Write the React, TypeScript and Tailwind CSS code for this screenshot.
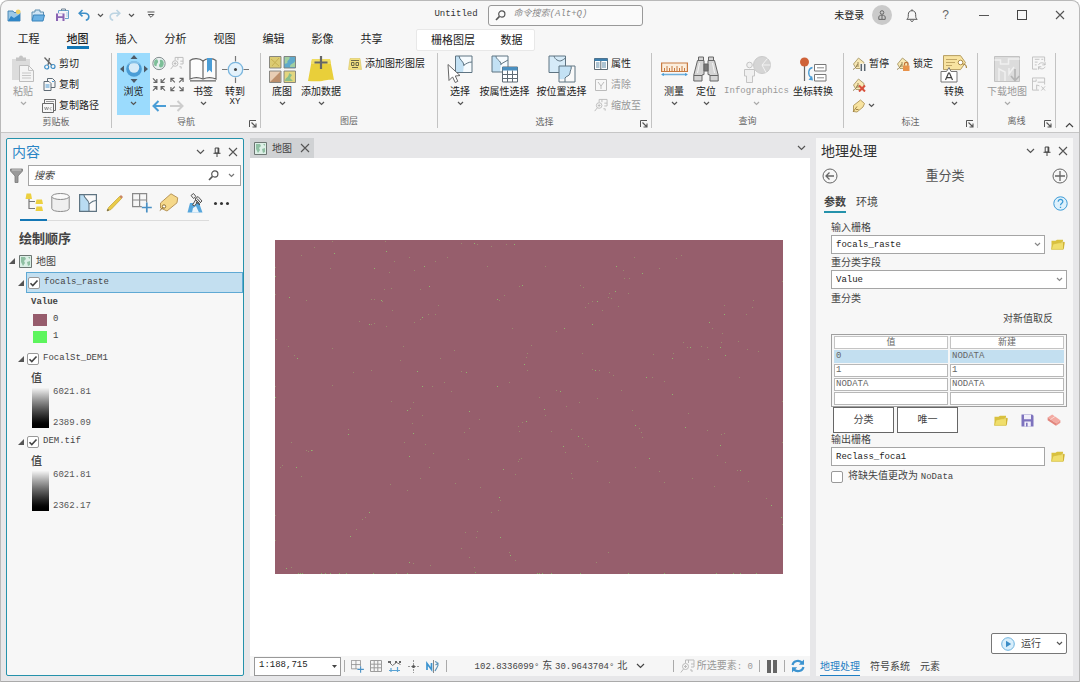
import { useState } from "react";
import type { ReactNode } from "react";
import clsx from "clsx";

const mono = "font-['Liberation_Mono','Noto_Sans_CJK_SC',monospace]";

/* ---------- small glyphs ---------- */

function Chevron({ className = "text-[#555]" }: { className?: string }) {
  return (
    <svg className={clsx("shrink-0", className)} width="7" height="5" viewBox="0 0 7 5" fill="none">
      <path d="M1 1l2.5 2.5L6 1" stroke="currentColor" strokeWidth="1.2" />
    </svg>
  );
}

function WideChevron({ className = "text-[#555]" }: { className?: string }) {
  return (
    <svg className={clsx("shrink-0", className)} width="9" height="6" viewBox="0 0 9 6" fill="none">
      <path d="M1 1l3.5 3.5L8 1" stroke="currentColor" strokeWidth="1.2" />
    </svg>
  );
}

function Cross() {
  return (
    <svg width="10" height="10" viewBox="0 0 10 10" fill="none">
      <path d="M1 1l8 8M9 1l-8 8" stroke="#555" strokeWidth="1.1" />
    </svg>
  );
}

function Pin() {
  return (
    <svg width="8" height="11" viewBox="0 0 8 11" fill="none" stroke="#444">
      <path d="M2.2 1h3.6v5H2.2zM.5 6.3h7M4 6.5V10" />
      <path d="M5.2 1v5" strokeWidth="1.3" />
    </svg>
  );
}

function Magnifier() {
  return (
    <svg className="shrink-0" width="11" height="11" viewBox="0 0 11 11" fill="none" stroke="#555">
      <circle cx="6.8" cy="4" r="3.1" strokeWidth="1.2" />
      <path d="M4.5 6.4L1 10" strokeWidth="1.6" />
    </svg>
  );
}

function Twisty() {
  return (
    <svg className="shrink-0" width="6" height="6" viewBox="0 0 6 6">
      <path d="M6 0v6H0z" fill="#555" />
    </svg>
  );
}

function Launcher() {
  return (
    <svg width="8" height="8" viewBox="0 0 8 8" fill="none" stroke="#555">
      <path d="M.5 7V.5H7" />
      <path d="M2.5 2.5l4 4M7 3.5V7H3.5" strokeWidth="1.1" />
    </svg>
  );
}

function Folder() {
  return (
    <svg width="14" height="11" viewBox="0 0 14 11">
      <path d="M.5 10V1.8h4L6 .8h6v1.7" fill="#d9c13f" />
      <path d="M.4 10.4L2 5l6-1.2 5.6-.4-1.4 7z" fill="#f0de6c" stroke="#d2bb3a" strokeWidth=".6" />
      <path d="M12.2 2.4l.8 1v5.6l-.8 1.2z" fill="#caa92e" />
    </svg>
  );
}

function SaveIcon() {
  return (
    <svg width="13" height="13" viewBox="0 0 13 13">
      <path d="M.5.5h10.7l1.3 1.3v10.7H.5z" fill="#7d72bd" />
      <path d="M3 .8h7v4.4H3zM3.4 7.6h6.4v4.9H3.4z" fill="#f1effa" />
      <path d="M5 8.8h1.6v3.7H5z" fill="#7d72bd" />
    </svg>
  );
}

function Eraser() {
  return (
    <svg width="14" height="12" viewBox="0 0 14 12">
      <path d="M.6 3.6L5.2.6l8.2 5.6-4.4 3z" fill="#f3aaa2" />
      <path d="M.6 3.6L9 9.2v2.6L.6 6.2z" fill="#e2857c" />
      <path d="M9 9.2l4.4-3v2.6L9 11.8z" fill="#eb978e" />
      <path d="M3.5 5.5L8 2.5" stroke="#fbd8d3" />
    </svg>
  );
}

/* ---------- quick access toolbar ---------- */

function NewProject() {
  return (
    <svg width="14" height="13" viewBox="0 0 14 13">
      <path d="M1 2h5l1 1.5h6V12H1z" fill="#9cc9e6" stroke="#3f7fb0" strokeWidth=".9" />
      <path d="M1 12l3-5 3 2 6-4v7z" fill="#2f86c6" />
      <circle cx="11.2" cy="2.8" r="2.4" fill="#efd36a" />
    </svg>
  );
}

function OpenProject() {
  return (
    <svg width="14" height="13" viewBox="0 0 14 13" fill="none">
      <path d="M1 11V3h3V1h5v2h3.500v3" fill="#cfe5f5" stroke="#5f8fb0" />
      <path d="M1 12l1.500-6h11L12 12z" fill="#6bb1e3" stroke="#3883bb" />
    </svg>
  );
}

function SaveProject() {
  return (
    <svg width="15" height="14" viewBox="0 0 15 14" fill="none">
      <path d="M3.5 5V2.5h10v8H10" stroke="#6aa3cc" />
      <path d="M6.5 2.5V1h4v1.5" stroke="#6a7f90" />
      <path d="M12 4v5" stroke="#a9cde6" />
      <path d="M1 5.5h8.5V13H1z" fill="#8a64b4" />
      <path d="M3 5.5h4.5v2.7H3zM3 10h4.5v3H3z" fill="#f3eef9" />
    </svg>
  );
}

function Undo({ faded = false }: { faded?: boolean }) {
  return (
    <svg
      className={faded ? "-scale-x-100 text-[#bcd4e2]" : "text-[#3d8fc8]"}
      width="12"
      height="12"
      viewBox="0 0 12 12"
      fill="none"
      stroke="currentColor"
    >
      <path d="M4.5 1L1.2 4.2l3.3 3.2M1.5 4.2h5.3c5.4.3 5 6.3 1 7" strokeWidth="1.6" />
    </svg>
  );
}

function CustomizeBar() {
  return (
    <svg width="8" height="8" viewBox="0 0 8 8" fill="none" stroke="#555">
      <path d="M.5 1h7" />
      <path d="M1.2 3.5h5.6L4 6.3z" />
    </svg>
  );
}

function Bell() {
  return (
    <svg width="12" height="13" viewBox="0 0 12 13" fill="none" stroke="#555">
      <path d="M.8 10.3c1.500-1.300 1.500-2 1.500-4.600C2.300 3 3.800 1.700 6 1.700S9.700 3 9.700 5.700c0 2.600 0 3.300 1.500 4.600z" />
      <path d="M4.5 11.3c.5 1.500 2.500 1.500 3 0M6 .3v1.400" />
    </svg>
  );
}

/* ---------- ribbon icons ---------- */

function PasteIcon() {
  return (
    <svg width="24" height="28" viewBox="0 0 24 28">
      <path d="M1 4h18v21H1z" fill="#dcdcdc" />
      <path d="M5 2.500h3a2 2 0 014 0h3V6H5z" fill="#c4c4c4" />
      <path d="M8.500 10.500h9l5 5v11h-14z" fill="#f4f4f4" stroke="#bdbdbd" />
      <path d="M17.500 10.500v5h5M11 18h9M11 20.500h9M11 23h9" fill="none" stroke="#c6c6c6" />
    </svg>
  );
}

function CutIcon() {
  return (
    <svg width="13" height="13" viewBox="0 0 13 13" fill="none">
      <path d="M1.500.5L9 8.500M6.500 1L5 8" stroke="#666" strokeWidth="1.300" />
      <circle cx="3.700" cy="10" r="2" stroke="#3d8fc8" strokeWidth="1.200" />
      <circle cx="10" cy="9.500" r="2" stroke="#3d8fc8" strokeWidth="1.200" />
    </svg>
  );
}

function CopyIcon() {
  return (
    <svg width="13" height="13" viewBox="0 0 13 13" fill="#f7f7f7" stroke="#5f6b75">
      <path d="M4.500.5h5l2.500 2.500v6.500H4.500z" />
      <path d="M1 3.500h5L8 5.500v7H1z" />
      <path d="M2.500 7h4M2.500 9h4M9 3.500h2" stroke="#4c9ad2" />
    </svg>
  );
}

function CopyPathIcon() {
  return (
    <svg width="14" height="14" viewBox="0 0 14 14" fill="#f7f7f7" stroke="#6b6b6b">
      <path d="M2.500.5h11v11h-11z" />
      <path d="M4 2.500h8" stroke="#999" />
      <path d="M.5 4.500h11v9H.5z" />
      <path d="M2.500 8l1 3 1-3 1 3 1-3M9.500 8.500c-2 0-2 2.500 0 2.500" fill="none" stroke="#888" strokeWidth=".8" />
    </svg>
  );
}

function ExploreIcon() {
  return (
    <svg width="28" height="28" viewBox="0 0 28 28">
      <path d="M14 0l3.500 4h-7zM14 28l3.500-4h-7zM0 14l4-3.500v7zM28 14l-4-3.500v7z" fill="#4d5a66" />
      <circle cx="14" cy="14" r="7.800" fill="#4a9dd6" />
      <circle cx="14" cy="12.500" r="5.200" fill="#d6ebf8" />
      <path d="M7 10.500c2-6 12-6 14 0-3-3-11-3-14 0z" fill="#86c2e8" />
    </svg>
  );
}

function GlobeIcon() {
  return (
    <svg width="15" height="15" viewBox="0 0 15 15">
      <circle cx="7.500" cy="7.500" r="6.600" fill="#e8f1f0" stroke="#7b8588" />
      <path d="M3 4c2-2 3-1 3.500 1S5 7 5 9s-1 1.500-2 1-1-5 0-6zM9 3.500c3 0 4 2.500 3.500 5s-2.500 4-4 3-1-3 0-4-1-3 .5-4z" fill="#7dbf98" />
    </svg>
  );
}

function ZoomSelectionIcon() {
  return (
    <svg width="15" height="15" viewBox="0 0 15 15" fill="none" stroke="#bbb">
      <path d="M5.500 4V1h8.500v7h-3M8.500 1v3M11 5h3" />
      <circle cx="5.500" cy="7.500" r="3" />
      <path d="M4 7.500h3M5.500 6v3M3.500 10L.8 13.500M10 11h2v2" />
    </svg>
  );
}

function ArrowsIn() {
  return (
    <svg width="15" height="15" viewBox="0 0 15 15" fill="none" stroke="#666" strokeWidth="1.300">
      <path d="M1 1l4 4M1.500 5.200h3.700V1.500M14 1l-4 4M13.500 5.200H9.800V1.500M1 14l4-4M1.500 9.800h3.700v3.700M14 14l-4-4M13.500 9.800H9.800v3.700" />
    </svg>
  );
}

function ArrowsOut() {
  return (
    <svg width="15" height="15" viewBox="0 0 15 15" fill="none" stroke="#666" strokeWidth="1.300">
      <path d="M5.200 5.200l-4-4M1 4.700V1h3.700M9.800 5.200l4-4M10.300 1H14v3.700M5.200 9.800l-4 4M1 10.300V14h3.700M9.800 9.800l4 4M14 10.300V14h-3.700" />
    </svg>
  );
}

function NavArrow({ forward = false }: { forward?: boolean }) {
  return (
    <svg
      className={forward ? "-scale-x-100 text-[#cdcdcd]" : "text-[#4a9dd6]"}
      width="14"
      height="12"
      viewBox="0 0 14 12"
      fill="none"
      stroke="currentColor"
      strokeWidth="2"
    >
      <path d="M6.500 1L1.500 6l5 5M2 6h12" />
    </svg>
  );
}

function BookmarkIcon() {
  return (
    <svg width="28" height="25" viewBox="0 0 28 25" fill="#fcfcfc" stroke="#666" strokeWidth="1.200">
      <path d="M1 3.500C4 1 10.500 1 14 4c3.500-3 10-3 13-.5V22c-4-1.800-9-1.800-13 0-4-1.800-9-1.800-13 0z" />
      <path d="M14 4v18M1 23.800h26" fill="none" />
      <path d="M18 1h5v14.500L20.500 13 18 15.500z" fill="#4a9dd6" stroke="none" />
    </svg>
  );
}

function GoToXYIcon() {
  return (
    <svg width="27" height="27" viewBox="0 0 27 27" fill="none">
      <path d="M13.500 0v5.500M13.500 21.500V27M0 13.500h5.500M21.500 13.500H27" stroke="#777" strokeWidth="1.200" />
      <circle cx="13.500" cy="13.500" r="7.200" fill="#e4f2fb" stroke="#7bb6de" strokeWidth="1.300" />
      <circle cx="13.500" cy="13.500" r="1.500" fill="#444" />
    </svg>
  );
}

function BasemapIcon() {
  return (
    <svg width="27" height="27" viewBox="0 0 27 27">
      <path d="M.5.5h11.500v11.500H.5z" fill="#dccb72" />
      <path d="M2 3l8 7M10 2L3 10" stroke="#c6b052" />
      <path d="M15 .5h11.500v11.500H15z" fill="#5fa9cb" />
      <path d="M15.500 1h5c1 3-3 3-2 6l-3 1zM21 11c0-4 4-3 5-6v6z" fill="#a3cfa0" />
      <path d="M.5 15h11.500v11.500H.5z" fill="#e8cdb4" />
      <path d="M1 26L11.500 15.500V26z" fill="#bd8f6c" />
      <path d="M15 15h11.500v11.500H15z" fill="#e3d67f" />
      <path d="M16 25c0-4 4-3 4-8l3 2-2 3 3 3z" fill="#8abf8b" />
      <path
        d="M.5.5h11.500v11.500H.5zM15 .5h11.500v11.500H15zM.5 15h11.500v11.500H.5zM15 15h11.500v11.500H15z"
        fill="none"
        stroke="#7d7d78"
        strokeWidth=".9"
      />
    </svg>
  );
}

function AddDataIcon() {
  return (
    <svg width="26" height="26" viewBox="0 0 26 26">
      <path d="M4 3h18l4 21c-8-1.500-10 2.500-26 1z" fill="#e9cf3a" />
      <path d="M4 3h18l1 5H3z" fill="#efdc62" />
      <path d="M13 0v13M6.500 6.500h13" stroke="#666" strokeWidth="2.200" />
    </svg>
  );
}

function GraphicsLayerIcon() {
  return (
    <svg width="14" height="12" viewBox="0 0 14 12">
      <path d="M2 .5h10l1.500 11c-5-1-8 1-13 0z" fill="#f2e080" stroke="#d8c55e" strokeWidth=".6" />
      <path d="M3.500 4.500H6v3H3.500zM8 4.500h2.500v3H8zM4 9.500h6M3 2.500h8" fill="none" stroke="#6b6747" />
    </svg>
  );
}

function LayerTile() {
  return (
    <svg width="18" height="18" viewBox="0 0 18 18">
      <path d="M.6.6h16.800v16.800H.6z" fill="#fafafa" />
      <path d="M1 1h4c0 4 5 4 5 9v7H1z" fill="#b9dcf2" />
      <path d="M5 1c0 4 5 4.500 5 9v7M10 10c2-1 2-3 7-3.500" fill="none" stroke="#5f7482" strokeWidth="1.100" />
      <path d="M.6.6h16.800v16.800H.6z" fill="none" stroke="#5f7482" strokeWidth="1.200" />
    </svg>
  );
}

function SelectIcon() {
  return (
    <svg width="26" height="28" viewBox="0 0 26 28">
      <path d="M8.500 1h16.500v16.500H8.500z" fill="#f6fbfe" />
      <path d="M8.500 1H13c0 4 4 5 4 9l-1 7.500H8.500z" fill="#c3e1f4" />
      <path d="M12 1c0 4 5 5 5 10M17 10c2-1 4-3 8-3M8.500 1h16.500v16.500H8.500z" fill="none" stroke="#5f7482" />
      <path d="M1 9.500l1 16 3.600-3.600 2.600 5.600 2.600-1.200L8.300 21l4.700-.5z" fill="#fff" stroke="#666" />
    </svg>
  );
}

function SelectByAttributeIcon() {
  return (
    <svg width="27" height="28" viewBox="0 0 27 28">
      <path d="M1 1h16v16H1z" fill="#f6fbfe" />
      <path d="M1 1h4c0 4 5 4 5 8l-1 8H1z" fill="#c3e1f4" />
      <path d="M5 1c0 4 5 4 5 9M10 9l7-4M1 1h16v16H1z" fill="none" stroke="#5f7482" />
      <path d="M11.500 12h15v15h-15z" fill="#fff" stroke="#5f6b75" />
      <path d="M11.500 12h15v3.500h-15z" fill="#4a8fc0" />
      <path d="M11.500 19.500h15M11.500 23.500h15M16.500 15.500V27M21.500 15.500V27" stroke="#5f6b75" />
    </svg>
  );
}

function SelectByLocationIcon() {
  return (
    <svg width="28" height="28" viewBox="0 0 28 28">
      <path d="M1 1h16.500v16.500H1z" fill="#d6ebf8" stroke="#5f7482" />
      <path d="M6 1c1 4 5 5 6 5s3-1 5.500-3" fill="none" stroke="#5f7482" />
      <path d="M11 11h16v16H11z" fill="#fafafa" />
      <path d="M11 11h12c1 3-1 4-1 7s-3 3-5 5-3 1-6 1z" fill="#c3e1f4" />
      <path d="M23 11c1 3-1 4-1 7s-4 3-5 5v4M11 11h16v16H11z" fill="none" stroke="#5f7482" />
    </svg>
  );
}

function AttributesIcon() {
  return (
    <svg width="14" height="12" viewBox="0 0 14 12">
      <path d="M.5.5h13v11H.5z" fill="#fff" stroke="#5f6b75" />
      <path d="M.5.5h13v2.500H.5z" fill="#3d7fae" />
      <path d="M2 5h3.500M2 7h3.500M2 9h3.500M8 5h4M8 7h4M8 9h4" stroke="#5d88a5" />
      <path d="M6.800 3v8.500" stroke="#5f6b75" />
    </svg>
  );
}

function ClearIcon() {
  return (
    <svg width="12" height="12" viewBox="0 0 12 12" fill="none" stroke="#bbb">
      <path d="M.5.5h11v11H.5zM3 3l3 4M9 3L6 7v3" />
    </svg>
  );
}

function MeasureIcon() {
  return (
    <svg width="27" height="14" viewBox="0 0 27 14" fill="none">
      <path d="M.6 1h25.800v8.500H.6z" fill="#fbeedd" stroke="#c87a41" strokeWidth="1.200" />
      <path d="M3.500 9V6M6 9V4M8.500 9V6M11 9V4M13.500 9V6M16 9V4M18.500 9V6M21 9V4M23.500 9V6" stroke="#c87a41" />
      <path d="M1 12.500h25" stroke="#6fb0dc" strokeWidth="1.300" />
      <path d="M0 12.500l3-1.500v3zM27 12.500L24 11v3z" fill="#4a9dd6" />
    </svg>
  );
}

function BinocularsIcon() {
  return (
    <svg width="26" height="26" viewBox="0 0 26 26" fill="#d4d4d4" stroke="#666">
      <path d="M5.500 1h5v3.500h-5zM15.500 1h5v3.500h-5z" />
      <path d="M4.500 4.500h6.500v14l-2 .5v6H.8V19zM21.500 4.500H15v14l2 .5v6h8.200V19z" />
      <path d="M11 8h4v7h-4z" fill="#777" />
      <path d="M1 19.500h8M17 19.500h8" />
      <path d="M6.500 7L4.500 17M19.500 7l2 10" stroke="#f5f5f5" />
    </svg>
  );
}

function InfographicsIcon() {
  return (
    <svg width="28" height="27" viewBox="0 0 28 27" fill="#f0f0f0" stroke="#c4c4c4">
      <circle cx="19" cy="9" r="8.500" fill="#d5d5d5" stroke="#cacaca" />
      <path d="M19 9l5.500-6.500M19 9h8.500M19 9l4 7.500" stroke="#f2f2f2" />
      <circle cx="6.500" cy="9" r="2.800" />
      <path d="M1.500 13.500h10V20H9.500v6.500h-6V20h-2z" />
    </svg>
  );
}

function CoordinateIcon() {
  return (
    <svg width="28" height="25" viewBox="0 0 28 25" fill="none">
      <path d="M5.500 7v17" stroke="#666" strokeWidth="1.200" />
      <circle cx="5.500" cy="5" r="4.500" fill="#cf6238" />
      <path d="M15.500 7.500h11.500v6.500H15.500zM15.500 17.500h11.500v6.500H15.500z" fill="#fff" stroke="#777" />
      <path d="M18 10.800h7M18 20.800h7" stroke="#888" />
      <path d="M13.500 10.500c-4.500 1-5 7-1.500 10" stroke="#4a9dd6" strokeWidth="1.300" />
      <path d="M14 23.500l-4.500-.8 3.500-4z" fill="#4a9dd6" />
    </svg>
  );
}

function LabelTag({ children }: { children?: ReactNode }) {
  return (
    <svg width="14" height="14" viewBox="0 0 14 14" fill="none">
      <path d="M1.500 7L6.500 1 12 5.500l-.5 6H4z" fill="#f8e8b4" stroke="#a89868" strokeWidth=".9" />
      <path d="M1 12.500c2-1 4-3 4.500-5.500M4 9h3M6 5v3" stroke="#8f7b4b" strokeWidth=".9" />
      {children}
    </svg>
  );
}

function PauseLabelIcon() {
  return (
    <LabelTag>
      <path d="M8 6.500h6V14H8z" fill="#f7f7f7" />
      <path d="M9.300 7v7M12.700 7v7" stroke="#5a6670" strokeWidth="1.500" />
    </LabelTag>
  );
}

function LockLabelIcon() {
  return (
    <LabelTag>
      <path d="M7 8.500h6.500V14H7z" fill="#e8924a" />
      <path d="M8.500 8.500V7c0-2.200 3.500-2.200 3.500 0v1.500" stroke="#c2743a" strokeWidth="1.200" />
    </LabelTag>
  );
}

function UnplacedLabelIcon() {
  return (
    <LabelTag>
      <path d="M7 7.500l6 6M13 7.500l-6 6" stroke="#d8503b" strokeWidth="2" />
    </LabelTag>
  );
}

function MoreLabelIcon() {
  return (
    <svg width="14" height="14" viewBox="0 0 14 14" fill="none">
      <path d="M1.500 6.500L8.500 1l4 3.500L11 8l-6 5-3.500-.5z" fill="#f8e3a0" stroke="#b59d62" />
      <path d="M1 13l4-5.500M4 10.500h2.500" stroke="#9a7b3b" strokeWidth=".9" />
    </svg>
  );
}

function ConvertLabelIcon() {
  return (
    <svg width="28" height="28" viewBox="0 0 28 28" fill="none">
      <path d="M3.500.6h17l5 7-5 7h-17z" fill="#f8e3a0" stroke="#b59d62" />
      <path d="M6 4.500h11M6 7.500h9M6 10.500h6" stroke="#c2a765" />
      <circle cx="20.500" cy="7.500" r="2.300" fill="#fff" stroke="#a98a4a" />
      <path d="M22.500 9c3 0 4 2 4 4" stroke="#a98a4a" strokeWidth="1.200" />
      <path d="M1 16.500h5.500l2.500-4 2 4h6V27H1z" fill="#fff" stroke="#777" />
      <path d="M5.500 25l3-7h1l3 7M6.600 22.600h4.800" stroke="#444" strokeWidth="1.200" />
    </svg>
  );
}

function DownloadMapIcon() {
  return (
    <svg width="27" height="27" viewBox="0 0 27 27" fill="none" stroke="#c2c2c2">
      <path d="M.5.5h25v25H.5z" fill="#dcdcdc" />
      <path d="M.5 4h6v4h8V3h11M5 25V13l6 3v9M15 12v6l5-7" stroke="#f0f0f0" strokeWidth="1.500" />
      <path d="M21 13v11M17 20l4 4.500 4.500-4.500" stroke="#b5b5b5" strokeWidth="1.700" />
    </svg>
  );
}

function SyncIcon() {
  return (
    <svg width="15" height="15" viewBox="0 0 15 15" fill="none" stroke="#c0c0c0">
      <path d="M.5.5h13v5M.5.5v13h5M3 3h5M10 3h2M3 6h3M3 9h2M7 9c1-3 6-3 7 0M14 6v3h-3M14 11c-1 3-6 3-7 0M7 14v-3h3" />
    </svg>
  );
}

function RemoveOfflineIcon() {
  return (
    <svg width="15" height="15" viewBox="0 0 15 15" fill="none" stroke="#c0c0c0">
      <path d="M.5 13.500V.5h13v7M.5 4h4V2M6 5h7M5 13V8l3 1M.5 13.500h7M10 9.500l4 4.500M14 9.500L10 14" />
    </svg>
  );
}

/* ---------- contents pane icons ---------- */

function FunnelIcon() {
  return (
    <svg className="shrink-0" width="13" height="15" viewBox="0 0 13 15">
      <path d="M.5 1h12v2L8 8v6.500H5V8L.5 3z" fill="#999" stroke="#777" strokeWidth=".8" />
      <path d="M2 2h9" stroke="#ccc" />
    </svg>
  );
}

function DrawingOrderIcon() {
  return (
    <svg width="20" height="19" viewBox="0 0 20 19" fill="none">
      <path d="M5 6v9.500h6M5 8.500h6" stroke="#777" strokeWidth="1.200" />
      <path d="M2.500.5H7l1 5.500H1.500zM12.500 6.500H18l1 4.500h-7.500zM12.500 13.500H18l1 4.500h-7.500z" fill="#ecd040" />
    </svg>
  );
}

function DatabaseIcon() {
  return (
    <svg width="19" height="19" viewBox="0 0 19 19" fill="#efefef" stroke="#8c8c8c">
      <path d="M.8 3.500v12c0 4 17.400 4 17.400 0v-12" />
      <ellipse cx="9.500" cy="3.500" rx="8.700" ry="3" fill="#fafafa" />
    </svg>
  );
}

function PencilIcon() {
  return (
    <svg width="18" height="18" viewBox="0 0 18 18">
      <path d="M1 17l1.500-3.500 11-11 2 2L5 15.500z" fill="#e9cb49" stroke="#c4a332" strokeWidth=".7" />
      <path d="M13.500 2.500L15 1l2 2-1.500 1.700z" fill="#c98662" />
      <path d="M1 17l.8-2.200 1.400 1.400z" fill="#555" />
    </svg>
  );
}

function GridAddIcon({ size = 20 }: { size?: number }) {
  return (
    <svg width={size} height={size} viewBox="0 0 20 20" fill="none">
      <path d="M.6.6h14v13H.6zM7.600.6v13M.6 7h14" stroke="#8a8a8a" strokeWidth="1.200" />
      <path d="M14.800 9.500v10M9.800 14.500h10" stroke="#f7f7f7" strokeWidth="4" />
      <path d="M14.800 9.500v10M9.800 14.500h10" stroke="#4a90c4" strokeWidth="1.700" />
    </svg>
  );
}

function TagIcon() {
  return (
    <svg width="20" height="19" viewBox="0 0 20 19" fill="none">
      <path d="M1.500 10L12 .8l6.700 4-.7 5L8 18l-6.500-3z" fill="#f5d88a" stroke="#b8965a" />
      <circle cx="5" cy="13.500" r="1.700" fill="#fff" stroke="#8f6f2f" />
      <path d="M.8 17.500c1.500-1 2.700-2.200 3.500-3.500" stroke="#8f6f2f" />
    </svg>
  );
}

function ImageryIcon() {
  return (
    <svg width="17" height="20" viewBox="0 0 17 20" fill="none">
      <path d="M3 10h9l3.500 9.500H.5z" fill="#56a6dc" />
      <path d="M6 15l3-2 3 6.500H5z" fill="#e9f4fb" />
      <path d="M4 2.500L6.500.5l2.500 3-2.500 2zM8 6l3-2.500L15 8l-2.500 2.500zM5.500 12l3-5 2 2-3 4z" fill="#f0f0f0" stroke="#555" />
      <path d="M10 5.500l3.500 4M9 9l4 3" stroke="#444" />
    </svg>
  );
}

function MapThumb() {
  return (
    <svg className="shrink-0" width="13" height="13" viewBox="0 0 13 13">
      <path d="M.5.5h12v12H.5z" fill="#dcefe6" stroke="#6d7673" />
      <path d="M2 2h4l1 2-2 2 1 2-2 3L2 7zM8 7l3-1v4l-2 1zM9 2h2v2z" fill="#8fbfa2" />
    </svg>
  );
}

/* ---------- ribbon ---------- */

type BigButtonProps = {
  icon: ReactNode;
  label: string;
  width: string;
  menu?: boolean;
  disabled?: boolean;
  active?: boolean;
  sub?: string;
};

function BigButton({ icon, label, width, menu, disabled, active, sub }: BigButtonProps) {
  return (
    <button
      type="button"
      disabled={disabled}
      className={clsx(
        "flex h-[62px] shrink-0 flex-col items-center whitespace-nowrap text-[10px] leading-[13px]",
        width,
        active && "bg-[#9bdbfd]",
        disabled ? "text-[#999]" : "text-[#222]",
      )}
    >
      <span className="flex h-8 items-center justify-center">{icon}</span>
      <span className={/^[A-Z]/.test(label) ? `${mono} text-[9px]` : ""}>{label}</span>
      {sub ? <span className={`${mono} text-[9px] leading-[9px]`}>{sub}</span> : null}
      {menu ? <Chevron className={clsx("mt-[3px]", disabled ? "text-[#aaa]" : "text-[#555]")} /> : null}
    </button>
  );
}

function SmallButton({ icon, label, disabled }: { icon: ReactNode; label?: string; disabled?: boolean }) {
  return (
    <button
      type="button"
      disabled={disabled}
      className={clsx(
        "flex h-[21px] items-center gap-[3px] whitespace-nowrap text-[10px]",
        disabled ? "text-[#999]" : "text-[#222]",
      )}
    >
      <span className="flex w-[14px] shrink-0 justify-center">{icon}</span>
      {label}
    </button>
  );
}

type GroupProps = {
  title: string;
  width: string;
  launcher?: boolean;
  children: ReactNode;
};

function Group({ title, width, launcher, children }: GroupProps) {
  return (
    <section className={clsx("relative mb-1 flex shrink-0 flex-col border-r border-[#c3c3c3]", width)}>
      <div className="flex h-[65px] items-start">{children}</div>
      <h2 className="text-center text-[9px] leading-[13px] text-[#666]">{title}</h2>
      {launcher ? (
        <button type="button" aria-label={title} className="absolute right-[3px] bottom-0">
          <Launcher />
        </button>
      ) : null}
    </section>
  );
}

function Ribbon() {
  return (
    <div className="flex h-[82px] border-b border-[#c6c6c6] pt-[2px]">
      <Group title="剪贴板" width="w-[111px]">
        <BigButton icon={<PasteIcon />} label="粘贴" width="ml-[6px] w-[32px]" menu disabled />
        <div className="ml-[3px]">
          <SmallButton icon={<CutIcon />} label="剪切" />
          <SmallButton icon={<CopyIcon />} label="复制" />
          <SmallButton icon={<CopyPathIcon />} label="复制路径" />
        </div>
      </Group>
      <Group title="导航" width="w-[149px]" launcher>
        <BigButton icon={<ExploreIcon />} label="浏览" width="ml-[5px] w-[33px]" menu active />
        <div className="ml-[2px] grid grid-cols-2 gap-x-1">
          <SmallButton icon={<GlobeIcon />} />
          <SmallButton icon={<ZoomSelectionIcon />} disabled />
          <SmallButton icon={<ArrowsIn />} />
          <SmallButton icon={<ArrowsOut />} />
          <SmallButton icon={<NavArrow />} />
          <SmallButton icon={<NavArrow forward />} disabled />
        </div>
        <BigButton icon={<BookmarkIcon />} label="书签" width="ml-[3px] w-[32px]" menu />
        <BigButton icon={<GoToXYIcon />} label="转到" sub="XY" width="w-[32px]" />
      </Group>
      <Group title="图层" width="w-[177px]">
        <BigButton icon={<BasemapIcon />} label="底图" width="ml-[5px] w-[32px]" menu />
        <BigButton icon={<AddDataIcon />} label="添加数据" width="w-[46px]" menu />
        <div className="ml-1">
          <SmallButton icon={<GraphicsLayerIcon />} label="添加图形图层" />
        </div>
      </Group>
      <Group title="选择" width="w-[214px]" launcher>
        <BigButton icon={<SelectIcon />} label="选择" width="ml-[6px] w-[32px]" menu />
        <BigButton icon={<SelectByAttributeIcon />} label="按属性选择" width="w-[57px]" />
        <BigButton icon={<SelectByLocationIcon />} label="按位置选择" width="w-[57px]" />
        <div className="ml-1">
          <SmallButton icon={<AttributesIcon />} label="属性" />
          <SmallButton icon={<ClearIcon />} label="清除" disabled />
          <SmallButton icon={<ZoomSelectionIcon />} label="缩放至" disabled />
        </div>
      </Group>
      <Group title="查询" width="w-[192px]">
        <BigButton icon={<MeasureIcon />} label="测量" width="ml-[6px] w-[32px]" menu />
        <BigButton icon={<BinocularsIcon />} label="定位" width="w-[32px]" menu />
        <BigButton icon={<InfographicsIcon />} label="Infographics" width="w-[69px]" menu disabled />
        <BigButton icon={<CoordinateIcon />} label="坐标转换" width="w-[44px]" />
      </Group>
      <Group title="标注" width="w-[134px]" launcher>
        <div className="ml-2 w-[85px]">
          <div className="flex gap-[7px]">
            <SmallButton icon={<PauseLabelIcon />} label="暂停" />
            <SmallButton icon={<LockLabelIcon />} label="锁定" />
          </div>
          <SmallButton icon={<UnplacedLabelIcon />} />
          <div className="flex items-center gap-[2px]">
            <SmallButton icon={<MoreLabelIcon />} />
            <Chevron />
          </div>
        </div>
        <BigButton icon={<ConvertLabelIcon />} label="转换" width="w-[34px]" menu />
      </Group>
      <Group title="离线" width="w-[78px]" launcher>
        <BigButton icon={<DownloadMapIcon />} label="下载地图" width="ml-[6px] w-[46px]" menu disabled />
        <div className="ml-[2px]">
          <SmallButton icon={<SyncIcon />} disabled />
          <SmallButton icon={<RemoveOfflineIcon />} disabled />
        </div>
      </Group>
      <button type="button" aria-label="折叠" className="mt-auto ml-auto mr-[5px] mb-1 rotate-180">
        <WideChevron className="text-[#444]" />
      </button>
    </div>
  );
}

function TitleBar() {
  return (
    <header className="flex h-7 items-center">
      <div className="flex flex-1 items-center pl-[6px]">
        <button type="button" aria-label="新建"><NewProject /></button>
        <button type="button" aria-label="打开" className="ml-[10px]"><OpenProject /></button>
        <button type="button" aria-label="保存" className="ml-[10px]"><SaveProject /></button>
        <button type="button" aria-label="撤消" className="ml-2"><Undo /></button>
        <Chevron className="ml-[7px] text-[#555]" />
        <button type="button" aria-label="恢复" className="ml-[5px]"><Undo faded /></button>
        <Chevron className="ml-[7px] text-[#555]" />
        <button type="button" aria-label="自定义" className="ml-3"><CustomizeBar /></button>
      </div>
      <div className="ml-[5px] flex items-center gap-[10px]">
        <h1 className={`${mono} text-[9px] text-[#333]`}>Untitled</h1>
        <label className="flex h-[21px] w-[155px] items-center gap-2 rounded-[3px] border border-[#999] bg-[#fafafa] px-[6px]">
          <Magnifier />
          <input
            aria-label="命令搜索"
            placeholder="命令搜索(Alt+Q)"
            className={`${mono} w-full min-w-0 bg-transparent text-[9px] italic outline-none placeholder:text-[#888]`}
          />
        </label>
      </div>
      <div className="flex flex-1 items-center justify-end pr-[14px]">
        <span className="text-[10px] text-[#222]">未登录</span>
        <span className="ml-2 flex size-5 items-center justify-center rounded-full bg-[#cacaca]">
          <svg width="8" height="10" viewBox="0 0 8 10" fill="none" stroke="#666">
            <circle cx="4" cy="2.500" r="1.800" />
            <path d="M.8 9.400V6.500l1.700-1.200h3l1.700 1.200v2.900zM4 6v3" />
          </svg>
        </span>
        <button type="button" aria-label="通知" className="ml-[14px]"><Bell /></button>
        <button type="button" className="ml-6 text-[12px] text-[#666]">?</button>
        <button type="button" aria-label="最小化" className="ml-[30px] h-px w-[10px] bg-[#555]" />
        <button type="button" aria-label="最大化" className="ml-7 size-[10px] border border-[#444]" />
        <button type="button" aria-label="关闭" className="ml-7"><Cross /></button>
      </div>
    </header>
  );
}

const tabs = ["工程", "地图", "插入", "分析", "视图", "编辑", "影像", "共享"];

function TabStrip() {
  return (
    <nav className="flex h-[22px] pl-[3px] text-[11px] leading-[20px] text-[#222]">
      {tabs.map((t) => (
        <button key={t} type="button" className="flex w-[49px] flex-col items-center">
          <span className={clsx("h-[20px]", t === "地图" && "border-b-[3px] border-[#1477b5] font-medium")}>{t}</span>
        </button>
      ))}
      <div className="ml-5 flex w-[119px] rounded-[2px] border border-[#e8e8e8] bg-white">
        <button type="button" className="w-[72px]">栅格图层</button>
        <button type="button" className="flex-1">数据</button>
      </div>
    </nav>
  );
}

/* ---------- contents pane ---------- */

function PaneHeader({ title, className }: { title: string; className: string }) {
  return (
    <div className="flex h-[26px] items-center pl-[5px]">
      <h2 className={clsx("flex-1 text-[14px] leading-5", className)}>{title}</h2>
      <WideChevron />
      <button type="button" aria-label="固定" className="ml-2"><Pin /></button>
      <button type="button" aria-label="关闭" className="ml-[7px] mr-[5px]"><Cross /></button>
    </div>
  );
}

function LayerCheck({ name }: { name: string }) {
  const [on, setOn] = useState(true);
  return (
    <label className="flex items-center gap-1">
      <span className="relative flex size-3">
        <input
          type="checkbox"
          checked={on}
          onChange={() => setOn(!on)}
          className="size-3 appearance-none rounded-[2px] border border-[#999] bg-white"
        />
        {on ? (
          <svg className="pointer-events-none absolute inset-0" width="12" height="12" viewBox="0 0 12 12" fill="none">
            <path d="M2.500 6.200l2.300 2.300 4.700-5" stroke="#444" strokeWidth="1.600" />
          </svg>
        ) : null}
      </span>
      <span className={`${mono} text-[9px]`}>{name}</span>
    </label>
  );
}

function Stretch({ name, high, low }: { name: string; high: string; low: string }) {
  return (
    <li className="mt-[3px]">
      <div className="flex h-[21px] items-center gap-[3px] pl-[11px]">
        <Twisty />
        <LayerCheck name={name} />
      </div>
      <p className="pl-6 text-[11px] leading-[19px] font-medium">值</p>
      <div className="flex gap-1 pl-[25px]">
        <div className="h-10 w-[17px] bg-gradient-to-b from-[#f4f4f4] to-black" />
        <div className={`${mono} flex flex-col justify-between text-[9px] leading-[9px] text-[#555]`}>
          <span>{high}</span>
          <span>{low}</span>
        </div>
      </div>
    </li>
  );
}

const listModes = [
  { name: "绘制顺序", icon: <DrawingOrderIcon /> },
  { name: "数据源", icon: <DatabaseIcon /> },
  { name: "选择", icon: <LayerTile /> },
  { name: "编辑", icon: <PencilIcon /> },
  { name: "捕捉", icon: <GridAddIcon /> },
  { name: "标注", icon: <TagIcon /> },
  { name: "影像", icon: <ImageryIcon /> },
];

function ContentsPane() {
  return (
    <aside className="flex w-[238px] shrink-0 flex-col rounded-[2px] border border-[#2592ab] bg-[#f7f7f7] text-[#444]">
      <PaneHeader title="内容" className="text-[#2b86c6]" />
      <div className="flex items-center gap-[5px] pl-[3px] pr-[2px]">
        <FunnelIcon />
        <label className="flex h-[21px] min-w-0 flex-1 items-center gap-[9px] border border-[#a5a5a5] bg-white px-[5px]">
          <input
            aria-label="搜索"
            placeholder="搜索"
            className="min-w-0 flex-1 bg-transparent text-[10px] italic outline-none placeholder:text-[#444]"
          />
          <Magnifier />
          <Chevron className="text-[#777]" />
        </label>
      </div>
      <div className="flex h-[35px]">
        <div className="ml-[13px] flex border-b border-[#dcdcdc]">
          {listModes.map((m, i) => (
            <button
              key={m.name}
              type="button"
              aria-label={m.name}
              className={clsx(
                "-mb-px flex w-[27px] items-center justify-center border-b-2",
                i === 0 ? "border-[#1477b5]" : "border-transparent",
              )}
            >
              {m.icon}
            </button>
          ))}
        </div>
        <button type="button" aria-label="更多" className="ml-[5px] flex items-center gap-[3px]">
          <i className="size-[3px] rounded-full bg-[#333]" />
          <i className="size-[3px] rounded-full bg-[#333]" />
          <i className="size-[3px] rounded-full bg-[#333]" />
        </button>
      </div>
      <h3 className="mt-[7px] pl-3 text-[13px] leading-[22px] font-bold">绘制顺序</h3>
      <div className="flex h-[22px] items-center gap-1 pl-[2px] text-[10px]">
        <Twisty />
        <MapThumb />
        地图
      </div>
      <ul>
        <li>
          <div className="flex items-center gap-[2px] pl-[11px]">
            <Twisty />
            <div className="flex h-[21px] flex-1 items-center border border-[#5fa9d4] bg-[#c3dff0] pl-px">
              <LayerCheck name="focals_raste" />
            </div>
          </div>
          <p className={`${mono} pl-6 text-[9px] leading-[18px] font-bold`}>Value</p>
          <p className={`${mono} flex h-[17px] items-center gap-[6px] pl-[26px] text-[9px]`}>
            <i className="h-3 w-[14px] bg-[#965c6c]" />0
          </p>
          <p className={`${mono} flex h-[17px] items-center gap-[6px] pl-[26px] text-[9px]`}>
            <i className="h-3 w-[14px] bg-[#5df55d]" />1
          </p>
        </li>
        <Stretch name="FocalSt_DEM1" high="6021.81" low="2389.09" />
        <Stretch name="DEM.tif" high="6021.81" low="2362.17" />
      </ul>
    </aside>
  );
}

/* ---------- map view ---------- */

// cells of class 1, in thirds of a map pixel
const cells: [number, number][] = [
  [132, 36], [186, 20], [193, 55], [95, 60], [181, 100], [346, 18], [348, 50], [372, 80], [417, 66], [434, 105],
  [464, 93], [495, 79], [531, 68], [575, 25], [613, 24], [623, 28], [664, 34], [709, 29], [733, 27], [653, 93],
  [828, 94], [1095, 68], [1043, 93], [1063, 106], [1067, 130], [1080, 131], [1121, 115], [1170, 99], [1223, 71], [1236, 62],
  [313, 100], [358, 113], [342, 163], [363, 160], [57, 188], [109, 195], [303, 193], [313, 193], [334, 197], [337, 200],
  [367, 227], [450, 164], [478, 155], [504, 212], [495, 239], [474, 237], [458, 248], [452, 252], [432, 262], [267, 258],
  [297, 269], [303, 267], [313, 265], [349, 273], [683, 194], [689, 196], [704, 181], [748, 154], [758, 152], [728, 280],
  [786, 330], [863, 288], [886, 281], [935, 151], [942, 156], [970, 198], [985, 200], [957, 206], [950, 217], [1000, 227],
  [970, 267], [1017, 186], [1028, 190], [1020, 174], [1040, 168], [1078, 174], [1048, 213], [1367, 212], [1367, 237], [1452, 195],
  [1449, 216], [1431, 238], [1321, 261], [1331, 281], [1361, 295], [1356, 323], [1354, 337], [1409, 320], [1243, 321], [1256, 336],
  [1263, 338], [1297, 333], [1314, 338], [1317, 372], [1370, 361], [1434, 344], [1467, 349], [1213, 355], [1211, 370], [1153, 357],
  [55, 333], [72, 360], [82, 369], [186, 340], [399, 333], [391, 376], [441, 410], [511, 369], [552, 347], [575, 410],
  [588, 413], [303, 406], [249, 413], [186, 451], [458, 455], [488, 455], [523, 441], [543, 468], [682, 455], [718, 443],
  [771, 355], [770, 368], [763, 388], [771, 406], [941, 354], [971, 402], [978, 405], [991, 406], [1020, 412], [1033, 420],
  [1132, 427], [1151, 426], [1186, 440], [1410, 427], [1211, 478], [1058, 466], [984, 490], [863, 467], [875, 470], [812, 488],
  [931, 501], [892, 513], [827, 524], [830, 540], [363, 500], [430, 502], [412, 526], [420, 521], [458, 540], [428, 564],
  [598, 529], [627, 553], [598, 579], [584, 592], [430, 594], [404, 622], [467, 627], [490, 654], [417, 665], [478, 696],
  [451, 729], [235, 582], [235, 599], [65, 622], [109, 645], [115, 649], [123, 645], [128, 646], [30, 697], [36, 690],
  [80, 697], [95, 723], [746, 575], [757, 563], [768, 558], [748, 588], [848, 588], [906, 584], [928, 603], [940, 609],
  [950, 627], [957, 633], [882, 633], [888, 652], [985, 678], [1089, 527], [1100, 571], [1110, 580], [1118, 593], [1121, 606],
  [1140, 669], [1170, 708], [1099, 697], [1258, 536], [1248, 577], [1314, 586], [1357, 598], [1367, 594], [1353, 631], [1344, 660],
  [1368, 682], [1405, 705], [1413, 706], [1438, 740], [1455, 762], [1492, 792], [1507, 813], [1271, 730], [1337, 753], [1186, 741],
  [1190, 764], [1020, 742], [907, 714], [911, 731], [810, 764], [744, 680], [748, 672], [755, 669], [699, 704], [735, 719],
  [595, 672], [556, 744], [555, 763], [631, 757], [361, 748], [412, 768], [687, 789], [691, 798], [686, 829], [665, 835],
  [297, 835], [286, 851], [277, 857], [258, 887], [240, 908], [585, 896], [621, 893], [620, 911], [692, 910], [574, 944],
  [598, 971], [718, 955], [721, 965], [737, 979], [1017, 954], [981, 986], [418, 984], [430, 989], [480, 995], [613, 1001],
  [50, 1004], [63, 1000], [18, 312], [17, 455], [17, 488], [1540, 138], [1539, 500], [1540, 622], [1538, 849], [1540, 870],
  [84, 1017], [92, 1017], [98, 1017], [154, 1017], [166, 1017], [182, 1017], [208, 1017], [229, 1017], [310, 1017], [380, 1017],
  [411, 1017], [617, 1014], [804, 1017], [812, 1017], [820, 1017], [846, 1017], [933, 1017], [1077, 1017], [1187, 1017], [1341, 1017],
  [1393, 1017], [1413, 1017], [1462, 1017], [17, 845], [17, 918], [17, 97], [17, 123], [17, 179],
];

function RasterLayer() {
  return (
    <svg className="block w-full bg-[#965e6c]" viewBox="15 15 1527 1005" shapeRendering="crispEdges">
      {cells.map(([x, y], i) => (
        <rect
          key={i}
          x={15 + Math.floor((x - 15) / 3) * 3}
          y={15 + Math.floor((y - 15) / 3) * 3}
          width={3}
          height={3}
          fill={y > 1010 ? "#84ad68" : i % 4 === 2 ? "#8fb56f" : "#9a8a70"}
        />
      ))}
    </svg>
  );
}

function Divider() {
  return <span className="h-3 w-px shrink-0 bg-[#aaa]" />;
}

function StatusBar() {
  return (
    <footer className="flex h-5 shrink-0 items-center bg-[#f6f6f6] pl-1 text-[#444]">
      <div className="relative w-[87px] shrink-0">
        <select
          aria-label="比例"
          className={`${mono} block h-[19px] w-full appearance-none border border-[#999] bg-white pl-1 text-[9px] text-[#222]`}
        >
          <option>1:188,715</option>
        </select>
        <svg className="pointer-events-none absolute top-2 right-1" width="5" height="3" viewBox="0 0 5 3">
          <path d="M0 0h5L2.500 3z" fill="#444" />
        </svg>
      </div>
      <div className="ml-[3px] flex items-center gap-[6px]">
        <Divider />
        <GridAddIcon size={13} />
        <svg width="12" height="12" viewBox="0 0 12 12" fill="none" stroke="#9c9c9c">
          <path d="M.5.5h11v11H.5zM.5 4.200h11M.5 7.800h11M4.200.5v11M7.800.5v11" />
        </svg>
        <svg width="14" height="13" viewBox="0 0 14 13" fill="none">
          <path d="M1.500 2.500l3 3 4-3 4 2" stroke="#777" />
          <path d="M0 1h3v2H0zM11 1h2v2h-2zM7 1h2v2H7z" fill="#666" />
          <path d="M1 10.500h11M9.500 7v5M3 8v4" stroke="#5aa3d4" strokeWidth="1.200" />
        </svg>
        <svg width="12" height="13" viewBox="0 0 12 13" fill="none" stroke="#999">
          <path d="M5.500 0v13M0 6.500h12" strokeDasharray="2 1" />
          <circle cx="5.500" cy="6.500" r="1.500" fill="#555" stroke="none" />
        </svg>
        <svg width="14" height="13" viewBox="0 0 14 13" fill="none">
          <path d="M1 10V3.500l4.500 6V3" stroke="#3d94d0" strokeWidth="1.700" />
          <path d="M7.500 0v13" stroke="#888" />
          <path d="M9 1.500c3 1 4 3 2 6L9 11M9.500 5l3-2" stroke="#5a93ba" strokeWidth="1.200" />
        </svg>
        <Divider />
      </div>
      <div className="flex flex-1 items-center justify-center gap-[9px] text-[10px] whitespace-nowrap">
        <span>
          <span className={`${mono} text-[9px]`}>102.8336099°</span> 东{" "}
          <span className={`${mono} text-[9px]`}>30.9643704°</span> 北
        </span>
        <WideChevron className="text-[#444]" />
      </div>
      <div className="flex items-center gap-[6px] pr-[5px] text-[10px] text-[#999]">
        <Divider />
        <ZoomSelectionIcon />
        <span className="-ml-1">
          所选要素<span className={`${mono} text-[9px]`}>: 0</span>
        </span>
        <Divider />
        <button type="button" aria-label="暂停" className="flex gap-[2px] px-px">
          <i className="h-[13px] w-1 bg-[#666]" />
          <i className="h-[13px] w-1 bg-[#666]" />
        </button>
        <Divider />
        <button type="button" aria-label="刷新">
          <svg width="14" height="14" viewBox="0 0 14 14" fill="none" stroke="#3d94d0" strokeWidth="2.200">
            <path d="M1.500 6C2.500 1.500 8.500.5 11.500 4M12.500 8c-1 4.500-7 5.500-10 2" />
            <path d="M13 .5v5.300H7.800zM1 13.500V8.200h5.200z" fill="#3d94d0" stroke="none" />
          </svg>
        </button>
      </div>
    </footer>
  );
}

function MapView() {
  return (
    <main className="flex min-w-0 flex-1 flex-col">
      <div className="flex h-5 shrink-0 items-center justify-between">
        <div className="flex h-full items-center gap-[5px] bg-[#d0d2d4] px-1 text-[10px] text-[#444]">
          <MapThumb />
          地图
          <button type="button" aria-label="关闭" className="ml-[3px]"><Cross /></button>
        </div>
        <WideChevron className="mr-1 text-[#555]" />
      </div>
      <div className="flex flex-1 items-center bg-white pr-[27px] pl-[25px]">
        <RasterLayer />
      </div>
      <StatusBar />
    </main>
  );
}

/* ---------- geoprocessing pane ---------- */

const remap = [
  ["0", "NODATA"],
  ["1", "1"],
  ["NODATA", "NODATA"],
  ["", ""],
];

function Picker({ id, value }: { id: string; value: string }) {
  return (
    <div className="relative min-w-0 flex-1">
      <select
        id={id}
        className={`${mono} block h-[19px] w-full appearance-none border border-[#a5a5a5] bg-white pl-1 text-[9px] text-[#222]`}
      >
        <option>{value}</option>
      </select>
      <span className="pointer-events-none absolute inset-y-0 right-1 flex items-center">
        <Chevron className="text-[#888]" />
      </span>
    </div>
  );
}

function GeoprocessingPane() {
  return (
    <aside className="flex w-[257px] shrink-0 flex-col bg-[#f7f7f7] text-[#444]">
      <PaneHeader title="地理处理" className="text-[#333]" />
      <div className="flex h-6 items-center justify-between pl-[6px] pr-[5px]">
        <button type="button" aria-label="返回">
          <svg width="16" height="16" viewBox="0 0 16 16" fill="none" stroke="#666">
            <circle cx="8" cy="8" r="7" />
            <path d="M7.500 4.500L4 8l3.500 3.500M4 8h8" strokeWidth="1.300" />
          </svg>
        </button>
        <h3 className="text-[13px] leading-5 text-[#555]">重分类</h3>
        <button type="button" aria-label="添加">
          <svg width="16" height="16" viewBox="0 0 16 16" fill="none" stroke="#666">
            <circle cx="8" cy="8" r="7" />
            <path d="M8 3v10M3 8h10" strokeWidth="1.300" />
          </svg>
        </button>
      </div>
      <div className="mt-[5px] flex h-5 items-start gap-[10px] pl-2 pr-[5px] text-[11px] leading-[18px]">
        <button type="button" className="border-b-2 border-[#2592ab] font-bold">参数</button>
        <button type="button">环境</button>
        <button type="button" aria-label="帮助" className="ml-auto mt-[3px]">
          <svg width="15" height="15" viewBox="0 0 15 15" fill="none" stroke="#3d9bd6">
            <circle cx="7.500" cy="7.500" r="6.700" fill="#def1fc" />
            <path d="M5.200 5.700c0-3.200 4.800-3 4.600 0C9.700 7.300 7.500 7.300 7.500 9.300M7.500 10.700v1.300" strokeWidth="1.300" />
          </svg>
        </button>
      </div>
      <form className="flex flex-1 flex-col pl-[15px] pr-[6px] text-[10px] leading-[14px]" onSubmit={(e) => e.preventDefault()}>
        <label htmlFor="in-raster" className="mt-2">输入栅格</label>
        <div className="flex items-center gap-[6px]">
          <Picker id="in-raster" value="focals_raste" />
          <button type="button" aria-label="浏览" className="w-4"><Folder /></button>
        </div>
        <label htmlFor="field" className="mt-[2px]">重分类字段</label>
        <div className="flex">
          <Picker id="field" value="Value" />
        </div>
        <p className="mt-[3px]">重分类</p>
        <button type="button" className="mt-[6px] mr-[14px] self-end">对新值取反</button>
        <table className="mt-2 w-full table-fixed border-separate border-spacing-x-[2px] border-spacing-y-px border border-[#a0a0a0] text-[9px] leading-[11px] text-[#666]">
          <thead>
            <tr>
              <th className="h-[13px] border border-[#c4c4c4] bg-white p-0 font-normal">值</th>
              <th className="h-[13px] border border-[#c4c4c4] bg-white p-0 font-normal">新建</th>
            </tr>
          </thead>
          <tbody className={mono}>
            {remap.map((row, r) => (
              <tr key={r}>
                {row.map((cell, c) => (
                  <td
                    key={c}
                    className={clsx(
                      "h-[13px] border p-0 pl-px",
                      r === 0 ? "border-[#c3dff0] bg-[#c3dff0]" : "border-[#b8b8b8] bg-white",
                    )}
                  >
                    {cell}
                  </td>
                ))}
              </tr>
            ))}
          </tbody>
        </table>
        <div className="flex items-center gap-[3px] pl-[2px]">
          <button type="button" className="h-[26px] w-[61px] border border-[#666] bg-white">分类</button>
          <button type="button" className="h-[26px] w-[61px] border border-[#666] bg-white">唯一</button>
          <div className="ml-auto flex items-center gap-[13px] pr-[6px]">
            <button type="button" aria-label="加载"><Folder /></button>
            <button type="button" aria-label="保存"><SaveIcon /></button>
            <button type="button" aria-label="清除"><Eraser /></button>
          </div>
        </div>
        <label htmlFor="out-raster">输出栅格</label>
        <div className="flex items-center gap-[6px]">
          <input
            id="out-raster"
            defaultValue="Reclass_foca1"
            className={`${mono} h-[19px] min-w-0 flex-1 border border-[#a5a5a5] bg-white pl-1 text-[9px] text-[#222]`}
          />
          <button type="button" aria-label="浏览" className="w-4"><Folder /></button>
        </div>
        <label className="mt-[3px] flex items-center gap-[5px]">
          <input type="checkbox" className="size-3 appearance-none rounded-[2px] border border-[#999] bg-white" />
          <span>
            将缺失值更改为 <span className={`${mono} text-[9px]`}>NoData</span>
          </span>
        </label>
        <button
          type="button"
          className="mt-auto mb-[3px] flex h-[21px] w-[76px] items-center self-end rounded-[2px] border border-[#777] bg-white pl-[9px]"
        >
          <svg width="14" height="14" viewBox="0 0 14 14">
            <circle cx="7" cy="7" r="6.300" fill="#d8eefb" stroke="#6db2de" />
            <path d="M5 3.700v6.600L10.200 7z" fill="#3a8cc6" />
          </svg>
          <span className="ml-[6px] flex-1 text-left">运行</span>
          <Chevron className="mr-[3px] text-[#555]" />
        </button>
      </form>
      <div className="flex h-[19px] shrink-0 gap-[10px] pl-1 text-[10px]">
        <button type="button" className="border-b border-[#1f7fc4] text-[#1f7fc4]">地理处理</button>
        <button type="button">符号系统</button>
        <button type="button">元素</button>
      </div>
    </aside>
  );
}

export default function App() {
  return (
    <div className="flex h-screen flex-col overflow-hidden rounded-t-lg border-x border-t border-[#b9b9b9] bg-[#f7f7f7] font-['Liberation_Sans','Noto_Sans_CJK_SC',sans-serif]">
      <TitleBar />
      <TabStrip />
      <Ribbon />
      <div className="flex min-h-0 flex-1 gap-[6px] border-b border-[#aaa] bg-[#e7e7e9] pt-[5px] pr-[6px] pb-[5px] pl-[5px]">
        <ContentsPane />
        <MapView />
        <GeoprocessingPane />
      </div>
    </div>
  );
}
